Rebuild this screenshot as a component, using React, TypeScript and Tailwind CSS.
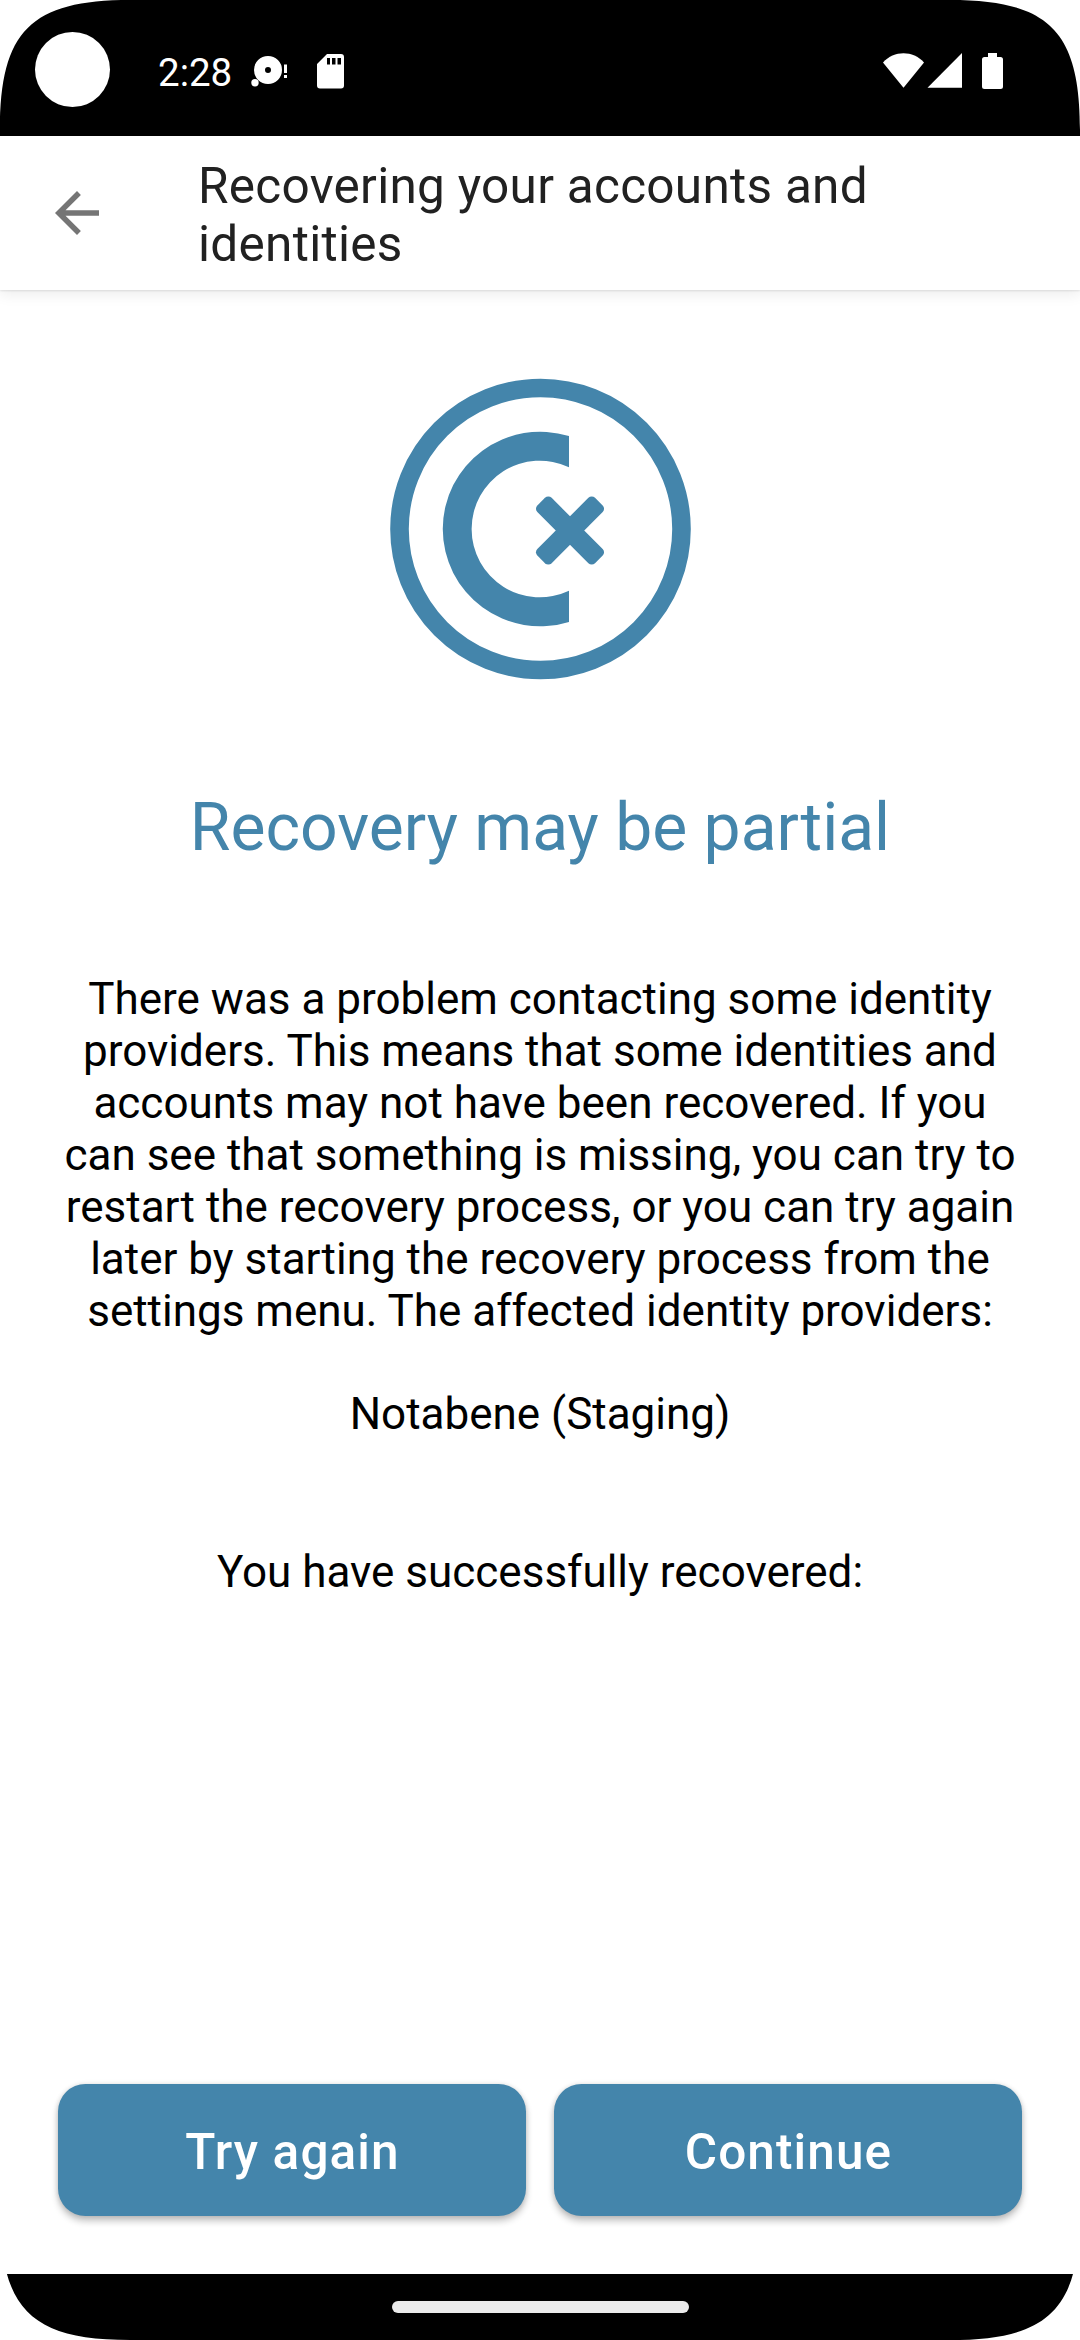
const CORNER = 'M0 0H130C31 0 0 31 0 130Z';

function Corner({ className }: { className: string }) {
  return (
    <svg className={`absolute size-[130px] ${className}`} viewBox="0 0 130 130" fill="#fff" aria-hidden="true">
      <path d={CORNER} />
    </svg>
  );
}

function StatusBar() {
  return (
    <div className="flex h-[136px] shrink-0 items-start bg-black text-white">
      <div className="mt-8 ml-[35px] size-[75px] rounded-full bg-white" />
      <span className="mt-[50px] ml-12 w-[94px] text-[38.5px] leading-[45px]">2:28</span>
      <svg className="mt-[49px] -ml-px size-[39px]" viewBox="251 49 39 39" fill="#fff" aria-hidden="true">
        <path fillRule="evenodd" d="M268 56a14 14 0 1 0 0 28a14 14 0 1 0 0-28ZM268 67a3 3 0 1 1 0 6a3 3 0 1 1 0-6Z" />
        <circle cx="255" cy="82.7" r="3.7" />
        <path d="M284 64.5h3V73h-3zM284 75h3v3h-3z" />
      </svg>
      <svg className="mt-[54px] ml-[27px] h-[35px] w-[27px]" viewBox="317 54 27 35" fill="#fff" aria-hidden="true">
        <path fillRule="evenodd" d="M327 54H341a3 3 0 0 1 3 3V85.500a3 3 0 0 1-3 3H320a3 3 0 0 1-3-3V64ZM327 58v6.500h3V58ZM332 58v6.500h3.500V58ZM337.500 58v6.500h3.500V58Z" />
      </svg>
      <svg className="mt-[52px] mr-[77px] ml-auto h-[38px] w-[120px]" viewBox="883 52 120 38" fill="#fff" aria-hidden="true">
        <path d="M883 62.500C894 50.200 913 50.200 924 62.500L903.500 87.700Z" />
        <path d="M927.500 87.700H962V53Z" />
        <path d="M988 53h9v4h3.500a2.500 2.500 0 0 1 2.500 2.500V86.500a2.500 2.500 0 0 1-2.500 2.500H984.500a2.500 2.500 0 0 1-2.500-2.500V59.500a2.500 2.500 0 0 1 2.500-2.500H988Z" />
      </svg>
    </div>
  );
}

function Emblem() {
  return (
    <svg className="size-[302px]" viewBox="-151 -151 302 302" fill="#4485ab" aria-hidden="true">
      <circle cx="0.5" r="141" fill="none" stroke="#4485ab" strokeWidth="18.600" />
      <path d="M29-92.900A97.300 97.300 0 1 0 29 92.900V61.800A68.300 68.300 0 1 1 29-61.800Z" />
      <g transform="translate(30 1.500)">
        <rect x="-40.800" y="-10.100" width="81.600" height="20.200" rx="4.700" transform="rotate(45)" />
        <rect x="-40.800" y="-10.100" width="81.600" height="20.200" rx="4.700" transform="rotate(-45)" />
      </g>
    </svg>
  );
}

function ActionButton({ label }: { label: string }) {
  return (
    <button className="h-[132px] flex-1 rounded-[27.5px] bg-[#4485ab] pt-1 pl-px text-[49.5px] font-medium tracking-[1.1px] text-white shadow-[0_5px_7px_rgba(0,0,0,0.24),0_0_5px_rgba(0,0,0,0.12)]">
      {label}
    </button>
  );
}

export default function App() {
  return (
    <div className="relative flex h-[2340px] w-[1080px] flex-col overflow-hidden bg-white font-[Roboto,sans-serif] text-black">
      <StatusBar />
      <header className="flex h-[154px] shrink-0 items-center bg-white pl-11 shadow-[0_1px_2px_rgba(0,0,0,0.1),0_4px_14px_rgba(0,0,0,0.08)]">
        <svg className="size-[66px]" viewBox="0 0 24 24" fill="#757575" aria-label="Back">
          <path d="M20 11H7.830l5.590-5.590L12 4l-8 8 8 8 1.410-1.410L7.830 13H20v-2z" />
        </svg>
        <h1 className="ml-[88px] pt-[3px] text-[49.5px] leading-[58px] tracking-[0.28px] text-[#212121]">
          Recovering your accounts and
          <br />
          identities
        </h1>
      </header>
      <main className="flex flex-1 flex-col items-center pt-[88px] text-center">
        <Emblem />
        <h2 className="mt-[109px] text-[66px] leading-[77px] text-[#4485ab]">Recovery may be partial</h2>
        <p className="mt-[107px] text-[44px] leading-[52px] whitespace-pre-line">
          {`There was a problem contacting some identity
providers. This means that some identities and
accounts may not have been recovered. If you
can see that something is missing, you can try to
restart the recovery process, or you can try again
later by starting the recovery process from the
settings menu. The affected identity providers:`}
        </p>
        <p className="mt-[51px] text-[44px] leading-[52px]">Notabene (Staging)</p>
        <p className="mt-[106px] text-[44px] leading-[52px]">You have successfully recovered:</p>
        <div className="mt-auto mb-[58px] flex w-full gap-7 px-[58px]">
          <ActionButton label="Try again" />
          <ActionButton label="Continue" />
        </div>
      </main>
      <footer className="flex h-[66px] shrink-0 justify-center bg-black pt-[27px]">
        <div className="h-3 w-[297px] rounded-full bg-[#ebebeb]" />
      </footer>
      <Corner className="top-0 left-0" />
      <Corner className="top-0 right-0 -scale-x-100" />
      <Corner className="bottom-0 left-0 -scale-y-100" />
      <Corner className="right-0 bottom-0 rotate-180" />
    </div>
  );
}
